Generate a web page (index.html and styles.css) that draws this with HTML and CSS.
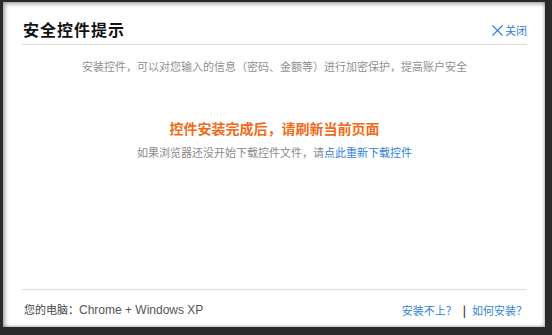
FILE: index.html
```html
<!DOCTYPE html>
<html lang="zh-CN">
<head>
<meta charset="utf-8">
<title>安全控件提示</title>
<link rel="stylesheet" href="styles.css">
</head>
<body>
<div class="frame">
  <div class="panel">
    <div class="header">
      <h1 class="title">安全控件提示</h1>
      <a class="close" href="#"><svg class="close-icon" width="11" height="11" viewBox="0 0 11 11"><path d="M0.5 0.5 L10.5 10.5 M10.5 0.5 L0.5 10.5" stroke="#2f7fd8" stroke-width="1.1" fill="none"/></svg>关闭</a>
    </div>
    <div class="body">
      <p class="intro">安装控件，可以对您输入的信息（密码、金额等）进行加密保护，提高账户安全</p>
      <p class="notice">控件安装完成后，请刷新当前页面</p>
      <p class="hint">如果浏览器还没开始下载控件文件，请<a class="link" href="#">点此重新下载控件</a></p>
    </div>
    <div class="footer">
      <div class="env">您的电脑：<span class="latin">Chrome + Windows XP</span></div>
      <div class="help"><a class="link" href="#">安装不上？</a><span class="sep">|</span><a class="link" href="#">如何安装？</a></div>
    </div>
  </div>
</div>
</body>
</html>
```
FILE: styles.css
```css
html, body {
  margin: 0;
  padding: 0;
}
body {
  width: 552px;
  height: 335px;
  background: #2a2a2a;
  font-family: "Noto Sans CJK SC", "DejaVu Sans", sans-serif;
  overflow: hidden;
}
.frame {
  box-sizing: border-box;
  width: 552px;
  height: 335px;
  padding: 2px 7px 8px 3px;
  background: #2a2a2a;
}
.panel {
  box-sizing: border-box;
  height: 100%;
  background: #fff;
  box-shadow: inset 2px 2px 4px rgba(0,0,0,0.35), inset -1px -1px 3px rgba(0,0,0,0.25);
  padding: 0 18px 0 19px;
  display: flex;
  flex-direction: column;
}
.header {
  display: flex;
  justify-content: space-between;
  align-items: flex-end;
  padding-top: 16px;
  padding-bottom: 4px;
  border-bottom: 1px solid #dcdcdc;
}
.title {
  margin: 0 0 0 1px;
  font-size: 16px;
  font-weight: bold;
  line-height: 22px;
  color: #111;
  letter-spacing: 1px;
}
.close {
  display: flex;
  align-items: center;
  gap: 2px;
  font-size: 11px;
  line-height: 16px;
  color: #2f7fd8;
  text-decoration: none;
  margin-bottom: 2px;
}
.close-icon {
  display: block;
}
.body {
  flex: 1;
  text-align: center;
  padding-top: 12px;
}
.intro {
  margin: 0;
  font-size: 11px;
  line-height: 18px;
  color: #8f8f8f;
}
.notice {
  margin: 43px 0 0;
  font-size: 14px;
  font-weight: bold;
  line-height: 20px;
  color: #f26a17;
}
.hint {
  margin: 5px 0 0;
  font-size: 11px;
  line-height: 18px;
  color: #8a8a8a;
}
.link {
  color: #2f7fd8;
  text-decoration: none;
}
.footer {
  display: flex;
  justify-content: space-between;
  align-items: center;
  border-top: 1px solid #dcdcdc;
  padding: 10px 0 8px 2px;
  font-size: 11px;
  line-height: 18px;
}
.env {
  color: #444;
}
.latin {
  font-family: "Liberation Sans", sans-serif;
  font-size: 12px;
  color: #555;
}
.help {
  display: flex;
  align-items: center;
}
.sep {
  color: #333;
  font-weight: bold;
  margin: 0 6px;
}
```
